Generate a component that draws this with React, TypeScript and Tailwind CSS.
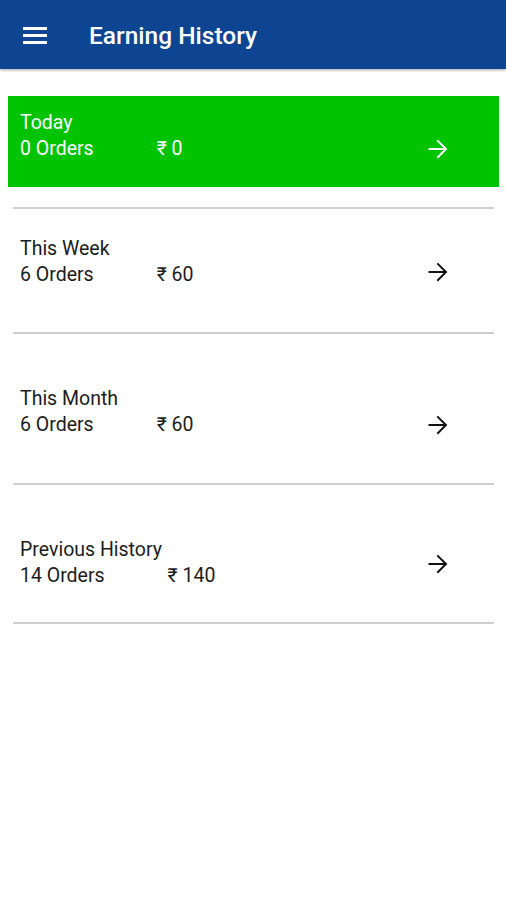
import React from "react";

function Arrow({ color }: { color: string }) {
  return (
    <svg width="30" height="30" viewBox="0 0 24 24" className="shrink-0">
      <path
        d="M12 4.5l-1.13 1.13 5.57 5.57H4.4v1.6h12.04l-5.57 5.57L12 19.5l7.5-7.5z"
        fill={color}
      />
    </svg>
  );
}

function Lines({
  title,
  orders,
  amount,
  light,
}: {
  title: string;
  orders: string;
  amount: string;
  light?: boolean;
}) {
  return (
    <div
      className={`text-[19.5px] leading-[26px] ${light ? "text-white" : "text-[#1c1c1c]"}`}
    >
      <div>{title}</div>
      <div className="flex">
        <span>{orders}</span>
        <span className="ml-[63px]">{amount}</span>
      </div>
    </div>
  );
}

export default function App() {
  const font = { fontFamily: "Roboto, 'Noto Sans', Arial, sans-serif" };
  return (
    <div className="w-[506px] h-[900px] bg-white" style={font}>
      <header className="h-[69px] bg-[#0d4592] flex items-center shadow-[0_1px_3px_rgba(0,0,0,0.35)] relative z-10">
        <div className="ml-[23px] mt-[1px] w-[24px] flex flex-col gap-[4px]">
          <div className="h-[3px] bg-white" />
          <div className="h-[3px] bg-white" />
          <div className="h-[3px] bg-white" />
        </div>
        <h1 className="ml-[42px] mt-[3px] text-white text-[24.5px] font-medium">
          Earning History
        </h1>
      </header>

      <main className="px-[8px] pt-[27px]">
        <div className="h-[91px] bg-[#00c300] flex justify-between pl-[12px] pr-[46px] mr-[-1px]">
          <div className="pt-[14px]">
            <Lines title="Today" orders="0 Orders" amount="₹ 0" light />
          </div>
          <div className="mt-[38px]">
            <Arrow color="#ffffff" />
          </div>
        </div>

        <div className="ml-[5px] mr-[4px] mt-[20px]">
          <div className="h-[2px] bg-[#cfcfcf]" />
          <div className="h-[123px] flex justify-between pl-[7px] pr-[41px]">
            <div className="pt-[27px]">
              <Lines title="This Week" orders="6 Orders" amount="₹ 60" />
            </div>
            <div className="mt-[48px]">
              <Arrow color="#111111" />
            </div>
          </div>
          <div className="h-[2px] bg-[#cfcfcf]" />
          <div className="h-[149px] flex justify-between pl-[7px] pr-[41px]">
            <div className="pt-[52px]">
              <Lines title="This Month" orders="6 Orders" amount="₹ 60" />
            </div>
            <div className="mt-[76px]">
              <Arrow color="#111111" />
            </div>
          </div>
          <div className="h-[2px] bg-[#cfcfcf]" />
          <div className="h-[137px] flex justify-between pl-[7px] pr-[41px]">
            <div className="pt-[52px]">
              <Lines title="Previous History" orders="14 Orders" amount="₹ 140" />
            </div>
            <div className="mt-[64px]">
              <Arrow color="#111111" />
            </div>
          </div>
          <div className="h-[2px] bg-[#cfcfcf]" />
        </div>
      </main>
    </div>
  );
}
